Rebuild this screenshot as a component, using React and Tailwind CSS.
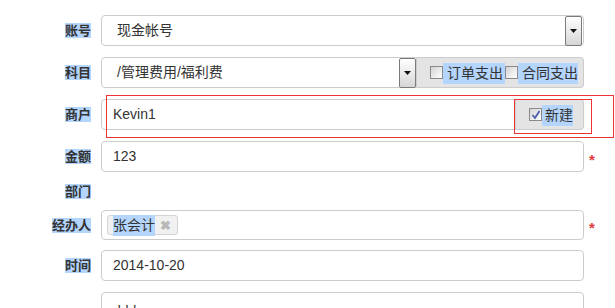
const sel = "bg-[#b4d5fe]";

function Label({ children }) {
  return (
    <div className="w-[91px] shrink-0 text-right text-[13px] font-bold text-[#333] leading-[15px]">
      <span className={sel}>{children}</span>
    </div>
  );
}

function DropBtn() {
  return (
    <div className="w-[17px] h-[30px] shrink-0 border border-[#7a7a7a] rounded-[2px] bg-gradient-to-b from-white to-[#d6d6d6] flex items-center justify-center">
      <svg width="7" height="4" viewBox="0 0 7 4"><path d="M0 0h7L3.5 4z" fill="#111" /></svg>
    </div>
  );
}

function Check({ checked }) {
  return (
    <span className="inline-flex w-[13px] h-[13px] border border-[#8a8a8a] bg-gradient-to-br from-[#d4d4d4] to-white items-center justify-center shrink-0">
      {checked && (
        <svg width="10" height="10" viewBox="0 0 10 10"><path d="M1.5 5l2.5 3L8.5 1" fill="none" stroke="#4a5fa8" strokeWidth="1.8" /></svg>
      )}
    </span>
  );
}

function Star() {
  return <span className="-ml-[5px] text-[#e0393e] text-[15px] font-bold leading-none pt-[5px]">*</span>;
}

export default function App() {
  return (
    <div className="w-[615px] h-[308px] overflow-hidden bg-white font-['Liberation_Sans','Noto_Sans_CJK_SC',sans-serif] text-[#333]">
      <div className="pt-[15px] flex flex-col">
        {/* 账号 */}
        <div className="flex items-center gap-[10px] h-[31px]">
          <Label>账号</Label>
          <div className="w-[483px] h-[31px] border border-[#ccc] rounded-[4px] flex items-center justify-between pl-[15px] pr-[1px] text-[14px]">
            <span>现金帐号</span>
            <DropBtn />
          </div>
        </div>

        {/* 科目 */}
        <div className="flex items-center gap-[10px] h-[31px] mt-[11px]">
          <Label>科目</Label>
          <div className="w-[483px] h-[31px] flex">
            <div className="w-[316px] h-full border border-[#ccc] rounded-l-[4px] flex items-center justify-between pl-[15px] text-[14px]">
              <span>/管理费用/福利费</span>
              <DropBtn />
            </div>
            <div className="flex-1 h-full bg-[#e4e4e4] border border-l-0 border-[#ccc] rounded-r-[4px] flex items-center pl-[13px] text-[14px]">
              <Check />
              <span className={sel + " pl-[4px] pr-[2px] mt-[2px]"}>订单支出</span>
              <Check />
              <span className={sel + " pl-[4px] mt-[2px]"}>合同支出</span>
            </div>
          </div>
        </div>

        {/* 商户 */}
        <div className="relative flex items-center gap-[10px] h-[31px] mt-[11px]">
          <Label>商户</Label>
          <div className="w-[483px] h-[31px] flex">
            <div className="flex-1 h-full border border-[#ccc] rounded-l-[4px] flex items-center pl-[11px] text-[14px]">
              Kevin1
            </div>
            <div className="w-[68px] h-full bg-[#e4e4e4] border border-l-0 border-[#ccc] rounded-r-[4px] flex items-center pl-[13px] text-[14px]">
              <Check checked />
              <span className={sel + " pl-[3px] mt-[2px]"}>新建</span>
            </div>
          </div>
          <div className="absolute left-[106px] right-[1px] top-[-4px] h-[43px] border border-[#ee3333]" />
          <div className="absolute left-[514px] top-0 w-[78px] h-[35px] border border-[#ee3333]" />
        </div>

        {/* 金额 */}
        <div className="flex items-center gap-[10px] h-[31px] mt-[11px]">
          <Label>金额</Label>
          <div className="w-[483px] h-[31px] border border-[#ccc] rounded-[4px] flex items-center pl-[11px] text-[14px]">123</div>
          <Star />
        </div>

        {/* 部门 */}
        <div className="flex items-center gap-[10px] h-[16px] mt-[11px]">
          <Label>部门</Label>
        </div>

        {/* 经办人 */}
        <div className="flex items-center gap-[10px] h-[30px] mt-[11px]">
          <Label>经办人</Label>
          <div className="w-[483px] h-[30px] border border-[#ccc] rounded-[4px] flex items-center pl-[5px]">
            <span className="h-[20px] border border-[#d4d4d4] rounded-[3px] bg-[#f1f1f1] flex items-center pl-[5px] pr-[6px] text-[14px]">
              <span className={sel}>张会计</span>
              <span className="ml-[5px] text-[#b8b8b8] text-[13px] font-bold leading-none">✖</span>
            </span>
          </div>
          <Star />
        </div>

        {/* 时间 */}
        <div className="flex items-center gap-[10px] h-[31px] mt-[10px]">
          <Label>时间</Label>
          <div className="w-[483px] h-[31px] border border-[#ccc] rounded-[4px] flex items-center pl-[11px] text-[14px]">2014-10-20</div>
        </div>

        {/* 备注 */}
        <div className="flex items-start gap-[10px] h-[31px] mt-[11px]">
          <div className="w-[91px] shrink-0" />
          <div className="w-[483px] h-[31px] border border-[#ccc] rounded-[4px] flex items-start pt-[8px] pl-[11px] text-[14px]">ddd</div>
        </div>
      </div>
    </div>
  );
}
